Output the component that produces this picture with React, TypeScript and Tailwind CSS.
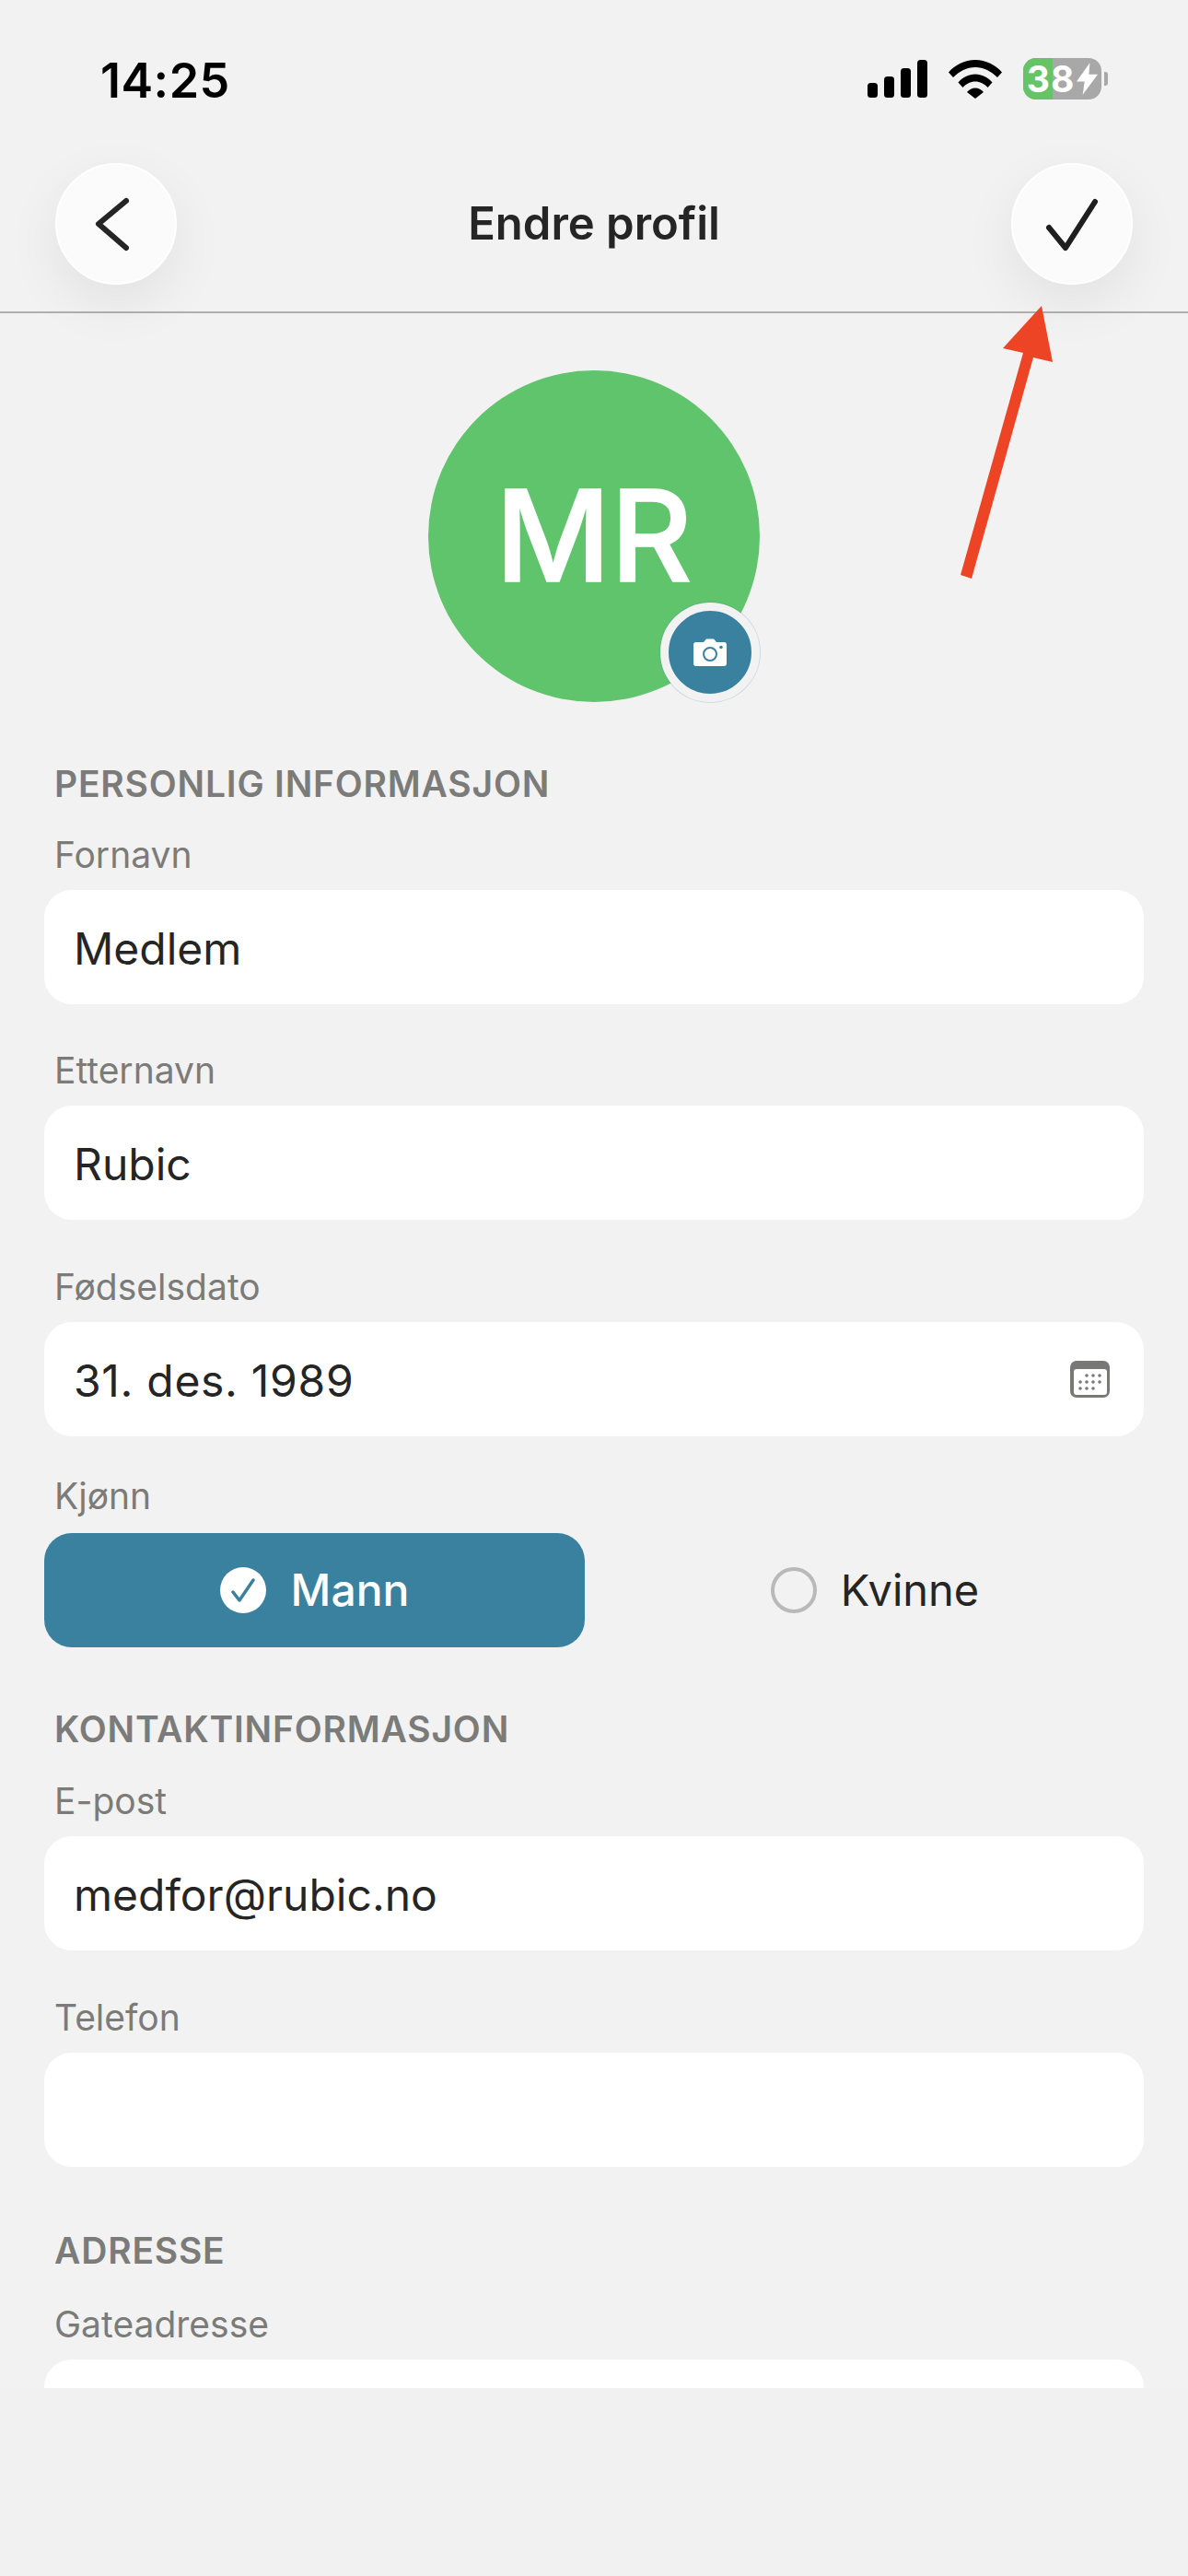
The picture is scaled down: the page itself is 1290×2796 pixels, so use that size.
const F = "font-['Inter',sans-serif]";

function Label({ children, className = "" }: { children: React.ReactNode; className?: string }) {
  return <div className={`px-[11px] text-[39px] leading-[46px] text-[#7b7b79] ${className}`}>{children}</div>;
}

function Section({ children, className = "" }: { children: React.ReactNode; className?: string }) {
  return <div className={`px-[11px] text-[39px] leading-[46px] font-semibold tracking-[0.8px] text-[#7b7b79] ${className}`}>{children}</div>;
}

function Field({ value, icon, valueClass = "" }: { value?: string; icon?: boolean; valueClass?: string }) {
  return (
    <div className="mt-[15px] flex h-[124px] items-center justify-between rounded-[30px] bg-white pl-[32px] pr-[37px] text-[48px] text-[#252525]">
      <span className={`pt-[3px] ${valueClass}`}>{value}</span>
      {icon && <CalendarIcon />}
    </div>
  );
}

function CalendarIcon() {
  return (
    <svg width="43" height="40" viewBox="0 0 43 40">
      <rect width="43" height="40" rx="7" fill="#787876" />
      <rect x="4" y="9" width="36" height="28" rx="3" fill="#fff" />
      {[[18, 16], [25, 16], [32, 16], [11, 23], [18, 23], [25, 23], [32, 23], [11, 30], [18, 30], [25, 30]].map(([cx, cy]) => (
        <circle key={`${cx}-${cy}`} cx={cx} cy={cy} r="1.8" fill="#787876" />
      ))}
    </svg>
  );
}

const roundBtn =
  "flex size-[132px] items-center justify-center rounded-full border-[2px] border-white bg-[#fbfbfb] shadow-[0_20px_60px_rgba(0,0,0,0.07)]";

export default function App() {
  return (
    <div className={`relative flex h-[2796px] w-[1290px] flex-col overflow-hidden bg-[#f1f1f1] ${F}`}>
      {/* status bar */}
      <div className="flex h-[177px] shrink-0 items-start justify-between bg-[#f2f2f2] pl-[109px] pr-[87px] pt-[60px]">
        <span className="text-[52px] leading-[56px] font-semibold tracking-[0.5px] text-black">14:25</span>
        <div className="flex items-center gap-[23px] pt-[3px]">
          <svg width="65" height="42" viewBox="0 0 65 42" fill="#000">
            <rect x="0" y="25" width="11" height="16" rx="3.5" />
            <rect x="18" y="18" width="11" height="23" rx="3.5" />
            <rect x="36" y="9" width="11" height="32" rx="3.5" />
            <rect x="54" y="0" width="11" height="41" rx="3.5" />
          </svg>
          <svg width="58" height="42" viewBox="0 0 58 42" fill="#000">
            <path d="M0 13.500C7 5.500 17.500 0 29 0s22 5.500 29 13.500l-5 5.500C46.500 12.500 38 8 29 8S11.500 12.500 5 19z" />
            <path d="M10.500 24.500C15 19 22 15.500 29 15.500S43 19 47.500 24.500l-5 5.500C39 26 34 23.500 29 23.500S19 26 15.500 30z" />
            <path d="M20 35C22.500 32 25.500 30.500 29 30.500S35.500 32 38 35l-9 7z" />
          </svg>
          <div className="flex items-center">
            <div className="relative flex h-[45px] w-[85px] items-center justify-center rounded-[14px] bg-[#a8a8a8] text-[39px] leading-none font-bold text-white">
              <div className="absolute inset-y-0 left-0 w-[32px] rounded-l-[14px] bg-[#65c466]" />
              <span className="relative flex items-center gap-[2px] tracking-[1px]">
                38
                <svg width="23" height="35" viewBox="0 0 24 36" fill="#fff"><path d="M15 0 0 21h9L7 36 24 13h-10z" /></svg>
              </span>
            </div>
            <div className="ml-[3px] h-[15px] w-[4px] rounded-r-[3px] bg-[#a8a8a8]" />
          </div>
        </div>
      </div>

      {/* header */}
      <div className="relative z-10 flex h-[163px] shrink-0 items-start justify-between border-b-[2px] border-[#b0b0b0] bg-[#f2f2f2] px-[60px]">
        <button className={roundBtn}>
          <svg width="132" height="132" viewBox="0 0 132 132" fill="none" stroke="#252525" strokeWidth="6" strokeLinecap="round" strokeLinejoin="round" className="shrink-0"><path d="M77 41 47 66l30 26" /></svg>
        </button>
        <div className="flex h-[132px] items-center text-[49px] font-semibold text-[#252525]">Endre profil</div>
        <button className={roundBtn}>
          <svg width="132" height="132" viewBox="0 0 132 132" fill="none" stroke="#1f1f1f" strokeWidth="6" strokeLinecap="round" strokeLinejoin="round" className="shrink-0"><path d="M41 70 59 92 91 42" /></svg>
        </button>
      </div>

      {/* form */}
      <div className="h-[2252px] shrink-0 overflow-hidden bg-[#f2f2f2] px-[48px] pt-[62px]">
        <div className="relative mx-auto flex size-[360px] items-center justify-center rounded-full bg-[#60c46c] text-[137px] font-medium text-white [-webkit-text-stroke:1.5px_white]">
          MR
          <div className="absolute bottom-0 right-0 flex size-[108px] items-center justify-center rounded-full border-[9px] border-[#f2f2f2] bg-[#3a81a0] shadow-[0_0_0_1px_rgba(58,129,160,0.2)]">
            <svg width="36" height="30" viewBox="0 0 36 30">
              <path d="M3 4h8l3-3.500h8l3 3.500h8a3 3 0 0 1 3 3v20a3 3 0 0 1-3 3H3a3 3 0 0 1-3-3V7a3 3 0 0 1 3-3z" fill="#fff" />
              <circle cx="18" cy="17" r="7" fill="#fff" stroke="#3a81a0" strokeWidth="2" />
              <circle cx="30" cy="9.500" r="1.800" fill="#3a81a0" />
            </svg>
          </div>
        </div>

        <Section className="mt-[66px]">PERSONLIG INFORMASJON</Section>
        <Label className="mt-[31px]">Fornavn</Label>
        <Field value="Medlem" />
        <Label className="mt-[49px]">Etternavn</Label>
        <Field value="Rubic" />
        <Label className="mt-[50px]">Fødselsdato</Label>
        <Field value="31. des. 1989" icon valueClass="tracking-[0.7px]" />
        <Label className="mt-[42px]">Kjønn</Label>
        <div className="mt-[17px] grid grid-cols-2 gap-[20px]">
          <div className="flex h-[124px] items-center justify-center gap-[27px] rounded-[30px] bg-[#3a81a0] text-[48px] font-medium text-white">
            <svg width="50" height="50" viewBox="0 0 50 50">
              <circle cx="25" cy="25" r="25" fill="#fff" />
              <path d="M14 27l7 9L36 14" fill="none" stroke="#3a81a0" strokeWidth="3.500" strokeLinecap="round" strokeLinejoin="round" />
            </svg>
            Mann
          </div>
          <div className="flex h-[124px] items-center justify-center gap-[26px] pl-[3px] text-[47px] text-[#252525]">
            <div className="size-[50px] rounded-full border-[4px] border-[#b9b9b9]" />
            Kvinne
          </div>
        </div>
        <Section className="mt-[66px]">KONTAKTINFORMASJON</Section>
        <Label className="mt-[32px]">E-post</Label>
        <Field value="medfor@rubic.no" />
        <Label className="mt-[50px]">Telefon</Label>
        <Field />
        <Section className="mt-[68px]">ADRESSE</Section>
        <Label className="mt-[34px]">Gateadresse</Label>
        <Field />
      </div>

      {/* annotation arrow */}
      <svg className="absolute left-0 top-0 z-20" width="1290" height="700" viewBox="0 0 1290 700">
        <path d="M1131 332 1143 393 1122 388 1055 628 1043 624 1111 383 1089 378z" fill="#ec4424" />
      </svg>
    </div>
  );
}
